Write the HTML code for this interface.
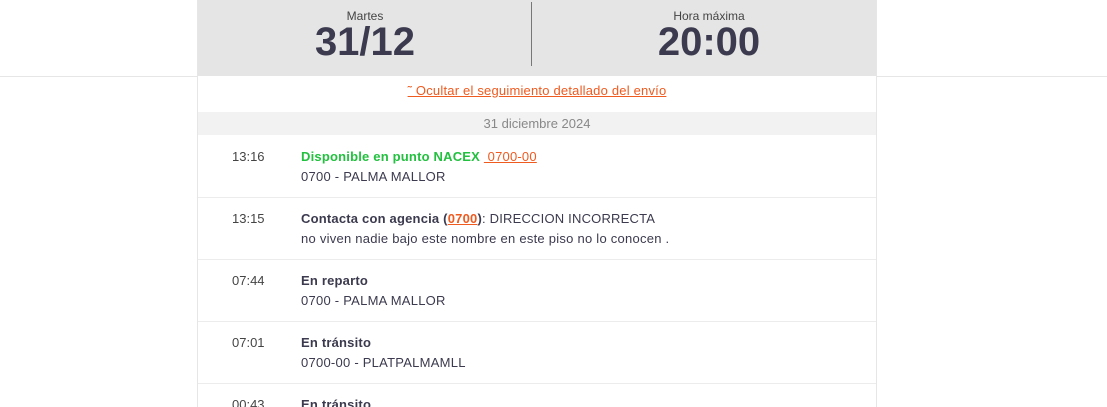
<!DOCTYPE html>
<html><head><meta charset="utf-8"><style>
html,body{margin:0;width:1107px;height:407px;overflow:hidden}
body{background:#fff;font-family:"Liberation Sans",sans-serif;color:#3b3a4e;position:relative}
.hline{position:absolute;left:0;right:0;top:76px;height:1px;background:#e6e6e6}
.box{position:absolute;left:197px;width:678px;top:0;height:407px;border-left:1px solid #e6e6e6;border-right:1px solid #e6e6e6;background:#fff;overflow:hidden}
.head{position:absolute;left:0;right:0;top:0;height:76px;background:#e5e5e5}
.col{position:absolute;top:9px;width:334px;text-align:center}
.col .l{font-size:12px;color:#444}
.col .b{font-size:40px;font-weight:bold;line-height:38px}
.div{position:absolute;left:333px;top:2px;width:1px;height:64px;background:#777}
.link{position:absolute;top:83px;left:0;right:0;text-align:center;font-size:13px;letter-spacing:0.2px;color:#ef5a1f;text-decoration:underline}
.date{position:absolute;top:112px;left:0;right:0;height:23px;background:#f2f2f2;text-align:center;font-size:13px;line-height:23px;color:#888}
.row{position:absolute;left:0;right:0;height:61px;border-bottom:1px solid #ececec}
.t{position:absolute;left:34px;top:13px;font-size:13px;color:#444}
.a{position:absolute;left:103px;top:13px;font-size:13px;font-weight:bold;letter-spacing:0.2px}
.s{position:absolute;left:103px;top:33px;font-size:13px;letter-spacing:0.25px}
.g{color:#22c03f}.o{color:#ef5a1f;text-decoration:underline}
</style></head><body>
<div class="hline"></div>
<div class="box">
<div class="head">
<div class="col" style="left:0"><div class="l">Martes</div><div class="b">31/12</div></div>
<div class="div"></div>
<div class="col" style="left:344px"><div class="l">Hora máxima</div><div class="b">20:00</div></div>
</div>
<div class="link">˜ Ocultar el seguimiento detallado del envío</div>
<div class="date">31 diciembre 2024</div>
<div class="row" style="top:136px"><div class="t">13:16</div><div class="a g">Disponible en punto NACEX <span class="o" style="font-weight:normal">&nbsp;0700-00</span></div><div class="s">0700 - PALMA MALLOR</div></div>
<div class="row" style="top:198px"><div class="t">13:15</div><div class="a">Contacta con agencia (<span class="o">0700</span>)<span style="font-weight:normal">: DIRECCION INCORRECTA</span></div><div class="s">no viven nadie bajo este nombre en este piso no lo conocen .</div></div>
<div class="row" style="top:260px"><div class="t">07:44</div><div class="a">En reparto</div><div class="s">0700 - PALMA MALLOR</div></div>
<div class="row" style="top:322px"><div class="t">07:01</div><div class="a">En tránsito</div><div class="s">0700-00 - PLATPALMAMLL</div></div>
<div class="row" style="top:384px;height:23px;border:0"><div class="t">00:43</div><div class="a">En tránsito</div></div>
</div>
</body></html>
